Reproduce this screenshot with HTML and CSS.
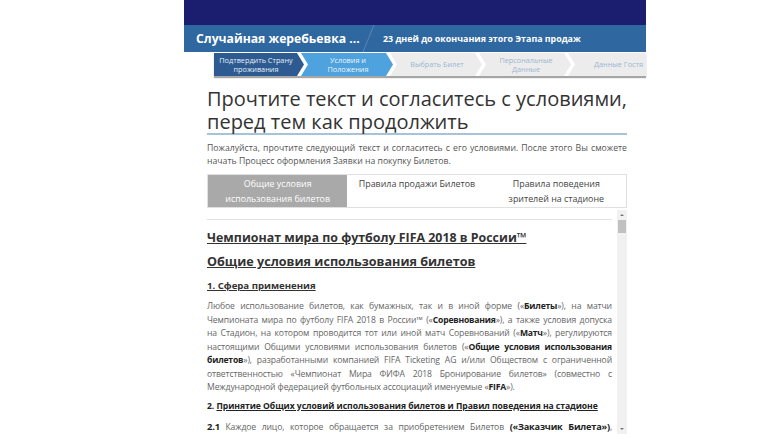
FILE: index.html
```html
<!DOCTYPE html>
<html lang="ru">
<head>
<meta charset="utf-8">
<link rel="stylesheet" href="styles.css">
</head>
<body>
<div class="page">
  <div class="top"></div>
  <div class="bar">
    <div class="bar-title">Случайная жеребьевка ...</div>
    <div class="bar-sep"></div>
    <div class="bar-info">23 дней до окончания этого Этапа продаж</div>
  </div>
  <div class="steps-wrap">
    <div class="steps">
      <div class="step step-done">Подтвердить Страну<br>проживания</div>
      <div class="step step-cur">Условия и<br>Положения</div>
      <div class="step step-next">Выбрать Билет</div>
      <div class="step step-next">Персональные<br>Данные</div>
      <div class="step step-next step-last">Данные Гостя</div>
    </div>
  </div>
  <div class="content">
    <h1 class="title">Прочтите текст и согласитесь с условиями, перед тем как продолжить</h1>
    <p class="intro">Пожалуйста, прочтите следующий текст и согласитесь с его условиями. После этого Вы сможете начать Процесс оформления Заявки на покупку Билетов.</p>
    <div class="tabs">
      <div class="tab tab-active">Общие условия<br>использования билетов</div>
      <div class="tab">Правила продажи Билетов</div>
      <div class="tab">Правила поведения<br>зрителей на стадионе</div>
    </div>
    <div class="scroller">
      <div class="doc">
        <div class="doc-rule"></div>
        <h2 class="doc-h1">Чемпионат мира по футболу FIFA 2018 в России™</h2>
        <h3 class="doc-h2">Общие условия использования билетов</h3>
        <h4 class="doc-h3">1. Сфера применения</h4>
        <div class="doc-p">
          <div class="just">Любое использование билетов, как бумажных, так и в иной форме («<b>Билеты</b>»), на матчи<br>Чемпионата мира по футболу FIFA 2018 в России™ («<b>Соревнования</b>»), а также условия допуска<br>на Стадион, на котором проводится тот или иной матч Соревнований («<b>Матч</b>»), регулируются<br>настоящими Общими условиями использования билетов («<b>Общие условия использования</b><br><b>билетов</b>»), разработанными компанией FIFA Ticketing AG и/или Обществом с ограниченной<br>ответственностью «Чемпионат Мира ФИФА 2018 Бронирование билетов» (совместно с</div>
          <div>Международной федерацией футбольных ассоциаций именуемые «<b>FIFA</b>»).</div>
        </div>
        <h4 class="doc-h4">2. <u>Принятие Общих условий использования билетов и Правил поведения на стадионе</u></h4>
        <div class="doc-p doc-p2">
          <div class="just"><b class="num">2.1</b> Каждое лицо, которое обращается за приобретением Билетов <b class="big">(«Заказчик Билета»)</b>,</div>
        </div>
      </div>
      <div class="sbar">
        <div class="sbar-up"></div>
        <div class="sbar-thumb"></div>
        <div class="sbar-track"></div>
        <div class="sbar-down"></div>
      </div>
    </div>
  </div>
</div>
</body>
</html>
```
FILE: styles.css
```css
html, body {
  margin: 0;
  padding: 0;
  background: #fff;
  height: 434px;
  overflow: hidden;
}
body {
  font-family: "Open Sans", "DejaVu Sans", sans-serif;
  color: #555;
}
.page {
  width: 462px;
  margin-left: 184px;
  height: 434px;
  display: flex;
  flex-direction: column;
}
.top {
  height: 25px;
  background: #1b1d6e;
  flex: none;
}
.bar {
  height: 27px;
  background: #2f67a0;
  display: flex;
  align-items: center;
  flex: none;
  color: #fff;
  font-weight: 700;
}
.bar-title {
  font-size: 12.2px;
  padding-left: 12px;
  width: 172px;
  white-space: nowrap;
}
.bar-sep {
  width: 1px;
  height: 27px;
  background: #5a86b5;
  transform: skewX(-22deg);
  margin-right: 14px;
}
.bar-info {
  font-size: 8.9px;
  white-space: nowrap;
}
.steps-wrap {
  margin-left: 30px;
  margin-top: 1px;
  flex: none;
  overflow: hidden;
  box-shadow: 0 2px 1px 0 rgba(0,0,0,0.35);
  height: 23px;
}
.steps {
  display: flex;
  height: 23px;
}
.step {
  flex: none;
  width: 92px;
  height: 23px;
  margin-right: -3px;
  display: flex;
  align-items: center;
  justify-content: center;
  text-align: center;
  font-size: 7.3px;
  line-height: 9px;
  clip-path: polygon(0 0, calc(100% - 7px) 0, 100% 50%, calc(100% - 7px) 100%, 0 100%, 7px 50%);
  padding-left: 7px;
  padding-right: 5px;
  box-sizing: border-box;
}
.step-done {
  background: #2d5b91;
  color: #e6eef7;
  clip-path: polygon(0 0, calc(100% - 7px) 0, 100% 50%, calc(100% - 7px) 100%, 0 100%);
  width: 90px;
  padding-left: 0;
  padding-right: 6px;
}
.step-cur {
  background: #4ea2dd;
  color: #eef6fc;
}
.step-next {
  background: #ececec;
  color: #9db5d2;
}
.step-last {
  width: 110px;
  padding-right: 16px;
}
.content {
  padding: 0 19px 0 23px;
  flex: 1;
  display: flex;
  flex-direction: column;
  min-height: 0;
}
.title {
  font-weight: 400;
  font-size: 20px;
  line-height: 23px;
  color: #333;
  margin: 11px 0 0;
  padding-bottom: 0;
  border-bottom: 2px solid #a8c3d8;
}
.intro {
  margin: 7px 0 0;
  font-size: 8.7px;
  line-height: 13px;
  text-align: justify;
  color: #555;
}
.tabs {
  margin-top: 6px;
  display: grid;
  grid-template-columns: 1fr 1fr 1fr;
  border: 1px solid #e0e0e0;
  height: 32px;
  flex: none;
}
.tab {
  text-align: center;
  font-size: 8.9px;
  line-height: 15px;
  color: #444;
  padding-top: 1px;
}
.tab-active {
  background: #a9a9a9;
  color: #fff;
}
.scroller {
  flex: 1;
  display: flex;
  min-height: 0;
  overflow: hidden;
  margin-top: 2px;
}
.doc {
  flex: 1;
  min-width: 0;
  padding-right: 5px;
}
.doc-rule {
  height: 1px;
  background: #e2e2e2;
  margin-top: 9px;
}
.doc-h1 {
  margin: 9px 0 0;
  font-size: 12.4px;
  line-height: 17px;
  font-weight: 700;
  text-decoration: underline;
  color: #333;
}
.doc-h2 {
  margin: 7px 0 0;
  font-size: 12.6px;
  line-height: 17px;
  font-weight: 700;
  text-decoration: underline;
  color: #333;
}
.doc-h3 {
  margin: 9px 0 0;
  font-size: 9.6px;
  line-height: 14px;
  font-weight: 700;
  text-decoration: underline;
  color: #333;
}
.doc-h4 {
  margin: 4px 0 0;
  font-size: 8.6px;
  line-height: 14px;
  font-weight: 700;
  color: #222;
  white-space: nowrap;
  letter-spacing: -0.05px;
}
.doc-p {
  margin: 7px 0 0;
  font-size: 8.6px;
  line-height: 13.5px;
  color: #666;
  letter-spacing: -0.1px;
}
.just {
  text-align: justify;
  text-align-last: justify;
}
.doc-p2 {
  margin-top: 7px;
}
.doc-p b {
  color: #222;
  letter-spacing: -0.2px;
}
.doc-p b.num {
  font-size: 9.4px;
}
.doc-p b.big {
  font-size: 9.2px;
}
.sbar {
  width: 10px;
  flex: none;
  background: #f1f1f1;
  display: flex;
  flex-direction: column;
}
.sbar-up, .sbar-down {
  height: 10px;
  flex: none;
  position: relative;
}
.sbar-up::after, .sbar-down::after {
  content: "";
  position: absolute;
  left: 3px;
  top: 4px;
  border-left: 2px solid transparent;
  border-right: 2px solid transparent;
}
.sbar-up::after { border-bottom: 2px solid #777; }
.sbar-down::after { border-top: 2px solid #777; }
.sbar-thumb {
  height: 13px;
  margin: 0 1px;
  background: #c1c1c1;
  flex: none;
}
.sbar-track { flex: 1; }
```
